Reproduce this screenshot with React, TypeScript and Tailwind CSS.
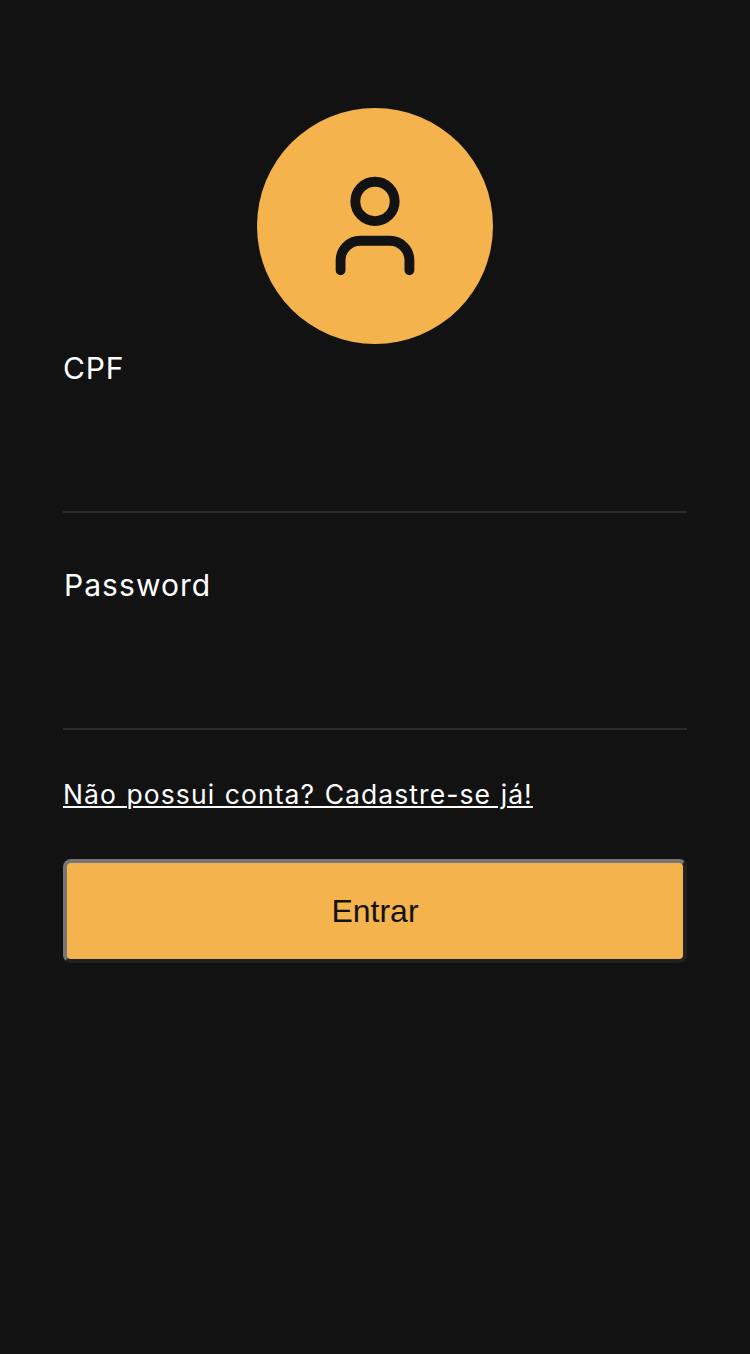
import { User } from "lucide-react";

function Field({ label, type }: { label: string; type: string }) {
  return (
    <label className="flex h-[168px] flex-col border-b-2 border-[#2b2b2b]">
      <span className={type === "password" ? "pl-px text-[30px] leading-[47px] tracking-[1.05px]" : "text-[30px] leading-[47px] tracking-[0.9px]"}>
        {label}
      </span>
      <input type={type} className="w-full flex-1 bg-transparent outline-none" />
    </label>
  );
}

export default function App() {
  return (
    <main className="flex min-h-[1354px] flex-col bg-[#121212] px-[63px] pt-[108px] font-['Inter','Liberation_Sans',sans-serif] text-white">
      <div className="flex size-[236px] items-center justify-center self-center rounded-full bg-[#f4b34d] text-[#121212]">
        <User size={118} strokeWidth={2} />
      </div>
      <form className="flex flex-col">
        <div className="flex flex-col gap-[49px] pt-px">
          <Field label="CPF" type="text" />
          <Field label="Password" type="password" />
        </div>
        <a
          href="#"
          className="mt-[44px] self-start whitespace-nowrap text-[26.5px] leading-[40px] tracking-[1.08px] [word-spacing:1px] underline decoration-2 underline-offset-[2px]"
        >
          Não possui conta? Cadastre-se já!
        </a>
        <button
          type="button"
          className="mt-[45px] h-[104px] rounded-lg border-4 border-t-[#767676] border-r-[#212121] border-b-[#212121] border-l-[#767676] bg-[#f4b34d] font-['Liberation_Sans',sans-serif] text-[32px] text-[#121212]"
        >
          Entrar
        </button>
      </form>
    </main>
  );
}
